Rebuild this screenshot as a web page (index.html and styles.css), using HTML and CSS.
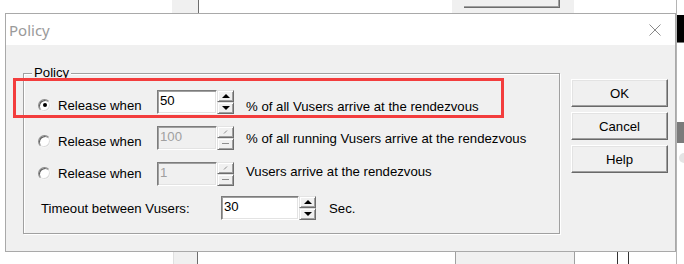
FILE: index.html
```html
<!DOCTYPE html>
<html lang="en">
<head>
    <meta charset="UTF-8">
    <title>Policy</title>
    <link rel="stylesheet" href="styles.css">
</head>
<body>
    <!-- bits of the application window behind the dialog -->
    <div class="bg bg-col-top"></div>
    <div class="bg bg-panel-top"><div class="bg-panel-btn"></div></div>
    <div class="bg bg-vline"></div>
    <div class="bg bg-black"></div>
    <div class="bg bg-band"></div>
    <div class="bg bg-knob"></div>
    <div class="bg bg-col-bottom"></div>
    <div class="bg bg-panel-bottom"></div>
    <div class="bg bg-line1"></div>
    <div class="bg bg-line2"></div>

    <div class="dialog">
        <div class="titlebar">
            <span class="title">Policy</span>
            <svg class="close" width="12" height="12" viewBox="0 0 12 12">
                <path d="M0.5 0.5 L11.5 11.5 M11.5 0.5 L0.5 11.5" stroke="#8a8a8a" stroke-width="1" fill="none"/>
            </svg>
        </div>

        <div class="dialog-body">
            <div class="group">
                <span class="legend">Policy</span>

                <div class="row">
                    <div class="choice shift">
                        <span class="radio checked"></span>
                        <span class="choice-label">Release when</span>
                    </div>
                    <div class="edit">50</div>
                    <div class="spin">
                        <div class="spin-btn"><span class="arrow-up"></span></div>
                        <div class="spin-btn"><span class="arrow-down"></span></div>
                    </div>
                    <span class="after low">% of all Vusers arrive at the rendezvous</span>
                </div>

                <div class="row">
                    <div class="choice shift">
                        <span class="radio"></span>
                        <span class="choice-label">Release when</span>
                    </div>
                    <div class="edit disabled">100</div>
                    <div class="spin">
                        <div class="spin-btn"><svg width="5" height="4" viewBox="0 0 5 4"><path d="M1 3.5 L4 0.5" stroke="#8d8d8d" fill="none"/></svg></div>
                        <div class="spin-btn"><svg width="7" height="2" viewBox="0 0 7 2"><path d="M0 0.5 H7" stroke="#8d8d8d" fill="none"/></svg></div>
                    </div>
                    <span class="after">% of all running Vusers arrive at the rendezvous</span>
                </div>

                <div class="row">
                    <div class="choice up">
                        <span class="radio"></span>
                        <span class="choice-label">Release when</span>
                    </div>
                    <div class="edit disabled">1</div>
                    <div class="spin">
                        <div class="spin-btn"><svg width="5" height="4" viewBox="0 0 5 4"><path d="M1 3.5 L4 0.5" stroke="#8d8d8d" fill="none"/></svg></div>
                        <div class="spin-btn"><svg width="7" height="2" viewBox="0 0 7 2"><path d="M0 0.5 H7" stroke="#8d8d8d" fill="none"/></svg></div>
                    </div>
                    <span class="after high">Vusers arrive at the rendezvous</span>
                </div>

                <div class="row timeout">
                    <span class="timeout-label">Timeout between Vusers:</span>
                    <div class="edit wide">30</div>
                    <div class="spin">
                        <div class="spin-btn"><span class="arrow-up"></span></div>
                        <div class="spin-btn"><span class="arrow-down"></span></div>
                    </div>
                    <span class="after sec">Sec.</span>
                </div>
            </div>

            <div class="buttons">
                <button class="btn">OK</button>
                <button class="btn">Cancel</button>
                <button class="btn">Help</button>
            </div>
        </div>

        <div class="highlight"></div>
    </div>
</body>
</html>
```

FILE: styles.css
```css
* {
    box-sizing: border-box;
}
body {
    margin: 0;
    padding: 13px 0 0 5px;
    width: 684px;
    height: 264px;
    overflow: hidden;
    position: relative;
    background-color: #fff;
    font-family: "Liberation Sans", Arial, sans-serif;
    font-size: 13.2px;
    color: #000;
}

/* background window pieces */
.bg {
    position: absolute;
}
.bg-col-top {
    left: 172px;
    top: 0;
    width: 27px;
    height: 13px;
    background-color: #f0f0f0;
    border-right: 1px solid #6d6d6d;
}
.bg-panel-top {
    left: 452px;
    top: 0;
    width: 122px;
    height: 13px;
    background-color: #f0f0f0;
}
.bg-panel-btn {
    margin-left: 12px;
    width: 96px;
    height: 8px;
    border-right: 1px solid #6d6d6d;
    border-bottom: 1px solid #6d6d6d;
    box-shadow: inset -1px -1px 0 #a0a0a0;
}
.bg-vline {
    left: 676px;
    top: 0;
    width: 1px;
    height: 264px;
    background-color: #b4b4b4;
}
.bg-black {
    left: 677px;
    top: 15px;
    width: 7px;
    height: 28px;
    background-color: #000;
    border-bottom: 1px solid #777;
}
.bg-band {
    left: 677px;
    top: 122px;
    width: 7px;
    height: 21px;
    background-color: #7b7b7b;
}
.bg-knob {
    left: 679px;
    top: 153px;
    width: 10px;
    height: 10px;
    border-radius: 50%;
    background-color: #e4e4e4;
}
.bg-col-bottom {
    left: 173px;
    top: 251px;
    width: 25px;
    height: 13px;
    background-color: #f0f0f0;
    border-left: 1px solid #e0e0e0;
    border-right: 1px solid #6d6d6d;
}
.bg-panel-bottom {
    left: 455px;
    top: 251px;
    width: 120px;
    height: 13px;
    background-color: #f0f0f0;
    border-left: 1px solid #a0a0a0;
    border-right: 1px solid #a0a0a0;
}
.bg-line1, .bg-line2 {
    top: 251px;
    width: 1px;
    height: 13px;
    background-color: #333;
}
.bg-line1 {
    left: 617px;
}
.bg-line2 {
    left: 628px;
}

/* dialog */
.dialog {
    position: relative;
    width: 671px;
    height: 239px;
    border: 1px solid #a9a9a9;
    background-color: #fff;
}
.titlebar {
    height: 31px;
    display: flex;
    align-items: center;
    justify-content: space-between;
    padding: 0 14px 0 3px;
}
.title {
    font-family: "Noto Sans", "Open Sans", sans-serif;
    font-size: 15px;
    color: #9a9a9a;
}
.dialog-body {
    height: 206px;
    background-color: #f0f0f0;
    display: flex;
    align-items: flex-start;
    padding: 28px 0 0 17px;
}

/* group box */
.group {
    position: relative;
    width: 537px;
    height: 161px;
    border: 1px solid #a0a0a0;
    box-shadow: inset 1px 1px 0 #fff, 1px 1px 0 #fff;
    display: flex;
    flex-direction: column;
    gap: 12px;
    padding: 16px 0 0 14px;
}
.legend {
    position: absolute;
    left: 8px;
    top: -9px;
    padding: 0 2px;
    line-height: 16px;
    background-color: #f0f0f0;
}
.row {
    display: flex;
    align-items: center;
    height: 24px;
}
.choice {
    display: flex;
    align-items: center;
    width: 119px;
}
.choice.shift {
    margin-top: 6px;
}
.choice.up {
    margin-top: -2px;
}
.choice-label {
    margin-left: 7px;
}
.radio {
    width: 13px;
    height: 13px;
    border-radius: 50%;
    background-color: #fff;
    border: 1px solid;
    border-color: #8a8a8a #f4f4f4 #f4f4f4 #8a8a8a;
    box-shadow: inset 1px 1px 0 #5f5f5f, inset -1px -1px 0 #dcdcdc;
    display: flex;
    align-items: center;
    justify-content: center;
}
.radio.checked::after {
    content: "";
    width: 4px;
    height: 4px;
    border-radius: 50%;
    background-color: #000;
}

/* edit + spin */
.edit {
    width: 60px;
    height: 24px;
    padding: 2px 0 0 2px;
    line-height: 16px;
    background-color: #fff;
    border: 1px solid;
    border-color: #7c7c7c #fff #fff #7c7c7c;
    box-shadow: inset 1px 1px 0 #a0a0a0, inset -1px -1px 0 #e3e3e3;
}
.edit.wide {
    width: 78px;
}
.edit.disabled {
    background-color: #f0f0f0;
    color: #a0a0a0;
}
.spin {
    display: flex;
    flex-direction: column;
    width: 17px;
    height: 24px;
}
.spin-btn {
    height: 12px;
    display: flex;
    align-items: center;
    justify-content: center;
    background-color: #f0f0f0;
    border: 1px solid;
    border-color: #e3e3e3 #6d6d6d #6d6d6d #e3e3e3;
    box-shadow: inset 1px 1px 0 #fff, inset -1px -1px 0 #a0a0a0;
}
.arrow-up {
    border-left: 4px solid transparent;
    border-right: 4px solid transparent;
    border-bottom: 4px solid #000;
}
.arrow-down {
    border-left: 4px solid transparent;
    border-right: 4px solid transparent;
    border-top: 4px solid #000;
}
.after {
    margin-left: 12px;
    white-space: nowrap;
}
.after.low {
    margin-top: 9px;
}
.after.high {
    margin-top: -5px;
}
.after.sec {
    margin-left: 13px;
}
.timeout {
    margin-top: -2px;
}
.timeout-label {
    width: 183px;
    padding-left: 3px;
}

/* buttons */
.buttons {
    display: flex;
    flex-direction: column;
    gap: 5px;
    margin: 6px 0 0 11px;
}
.btn {
    width: 97px;
    height: 28px;
    padding: 0;
    font-family: "Liberation Sans", Arial, sans-serif;
    font-size: 13.2px;
    color: #000;
    background-color: #f0f0f0;
    border: 1px solid;
    border-color: #fff #696969 #696969 #fff;
    box-shadow: inset -1px -1px 0 #a0a0a0, inset 1px 1px 0 #e3e3e3;
}

/* red annotation box */
.highlight {
    position: absolute;
    left: 7px;
    top: 64px;
    width: 491px;
    height: 40px;
    border: 3px solid #f33d3d;
}
```
